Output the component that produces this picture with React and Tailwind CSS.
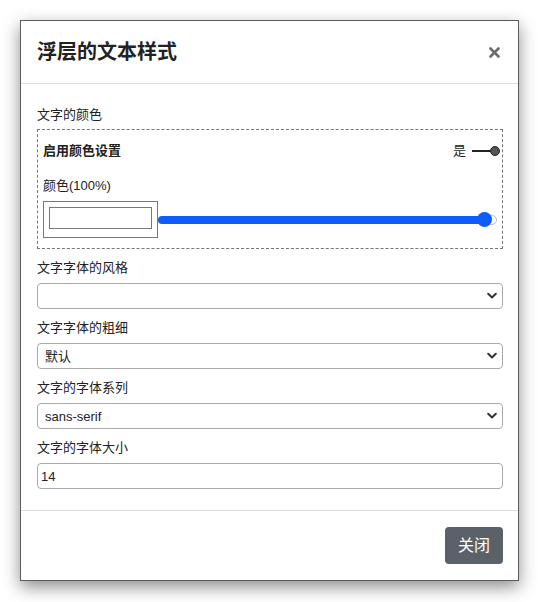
import React from "react";

const font = { fontFamily: '"Liberation Sans", "Noto Sans CJK SC", sans-serif' };

function Chevron() {
  return (
    <svg width="10" height="7" viewBox="0 0 10 7" className="absolute right-[5px] top-1/2 -translate-y-1/2">
      <path d="M1.2 1.2 L5 5 L8.8 1.2" fill="none" stroke="#333" strokeWidth="2" strokeLinecap="round" strokeLinejoin="round" />
    </svg>
  );
}

function Select({ value }) {
  return (
    <div className="relative h-[26px] w-full rounded-[4px] border border-[#a9a9a9] bg-white flex items-center pl-[7px] text-[13px] text-[#222] leading-none">
      <span>{value}</span>
      <Chevron />
    </div>
  );
}

function Label({ children }) {
  return <div className="h-[20px] leading-[20px] text-[13px] text-[#222] mb-[5px]">{children}</div>;
}

export default function App() {
  return (
    <div className="w-[538px] h-[602px] bg-white pt-[20px] pl-[20px]" style={font}>
      <div className="w-[499px] h-[561px] border border-[#5c5c5c] bg-white shadow-[0_6px_16px_rgba(0,0,0,0.45)] flex flex-col">
        <div className="h-[63px] border-b border-[#dcdcdc] flex items-center justify-between pl-[16px] pr-[18px]">
          <div className="text-[20px] font-bold text-[#222] leading-none">浮层的文本样式</div>
          <svg width="11" height="11" viewBox="0 0 11 11">
            <path d="M1.5 1.5 L9.5 9.5 M9.5 1.5 L1.5 9.5" stroke="#6b6b6b" strokeWidth="2.6" strokeLinecap="round" />
          </svg>
        </div>
        <div className="flex-1 pl-[16px] pr-[15px] pt-[21px] pb-[20px] flex flex-col gap-[9px]">
          <div>
            <div className="h-[20px] leading-[20px] text-[13px] text-[#222] mb-[4px]">文字的颜色</div>
            <div className="border border-dashed border-[#777] pl-[5px] pr-[2px] pt-[11px] pb-[10px]">
              <div className="h-[20px] flex items-center justify-between">
                <span className="text-[13px] font-bold text-[#222]">启用颜色设置</span>
                <div className="flex items-center">
                  <span className="text-[13px] text-[#222] mr-[6px]">是</span>
                  <div className="w-[19px] h-[2px] bg-[#222]"></div>
                  <div className="w-[10px] h-[10px] rounded-full bg-[#555] border-[1.5px] border-[#222] -ml-[1px]"></div>
                </div>
              </div>
              <div className="h-[20px] leading-[20px] text-[13px] text-[#222] mt-[15px] mb-[5px]">颜色(100%)</div>
              <div className="flex items-center">
                <div className="w-[115px] h-[37px] border border-[#777] p-[5px] shrink-0">
                  <div className="w-full h-[22px] border border-[#777] bg-white"></div>
                </div>
                <div className="relative flex-1 h-[16px] mr-[8px] flex items-center">
                  <div className="absolute right-[-5px] w-[10px] h-[10px] rounded-full border border-[#bbb] bg-white"></div>
                  <div className="w-full h-[8px] rounded-full bg-[#0c5dfb] mr-[2px]"></div>
                  <div className="absolute right-[0px] w-[15px] h-[15px] rounded-full bg-[#0c5dfb]"></div>
                </div>
              </div>
            </div>
          </div>
          <div>
            <Label>文字字体的风格</Label>
            <Select value="" />
          </div>
          <div>
            <Label>文字字体的粗细</Label>
            <Select value="默认" />
          </div>
          <div>
            <Label>文字的字体系列</Label>
            <Select value="sans-serif" />
          </div>
          <div>
            <Label>文字的字体大小</Label>
            <div className="h-[26px] w-full rounded-[4px] border border-[#a9a9a9] bg-white flex items-center pl-[3px] text-[13px] text-[#222] leading-none">14</div>
          </div>
        </div>
        <div className="h-[70px] border-t border-[#dcdcdc] flex items-center justify-end pr-[15px]">
          <button className="h-[37px] w-[58px] rounded-[4px] bg-[#5a6169] text-white text-[16px] leading-none">关闭</button>
        </div>
      </div>
    </div>
  );
}
